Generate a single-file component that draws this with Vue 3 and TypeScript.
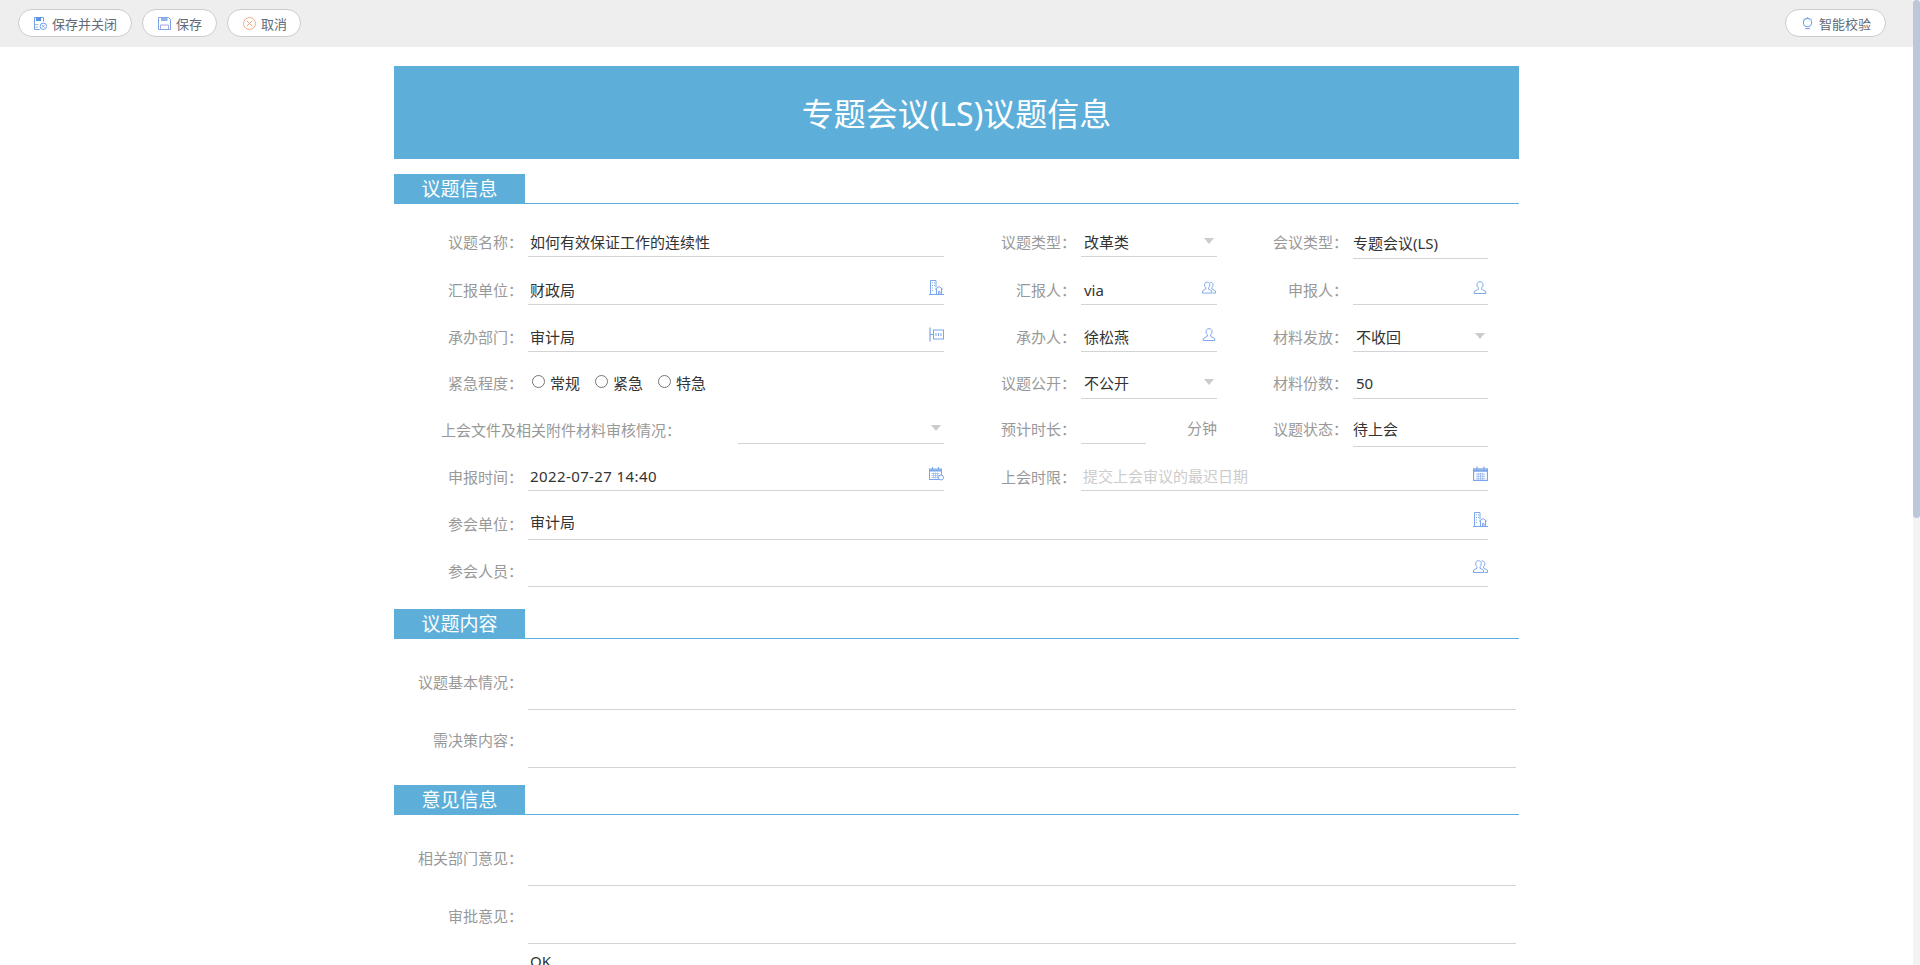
<script setup lang="ts">
const sections = {
  content: [
    { label: '议题基本情况：', value: '' },
    { label: '需决策内容：', value: '' },
  ],
  opinion: [
    { label: '相关部门意见：', value: '' },
    { label: '审批意见：', value: '' },
  ],
}
const urgency = ['常规', '紧急', '特急']
</script>

<template>
  <div class="page">
    <svg class="sprite" aria-hidden="true">
      <symbol id="i-building" viewBox="0 0 15 15">
        <path d="M0 14.500h15M1.500 14.500V0.500h5.500v7M3 3h1M5 3h1M3 5.500h1M5 5.500h1M3 8h1M3 10.500h1" fill="none" stroke="currentColor" />
        <path d="M6 9.500l4-3 4 3M7.500 9v5.500M12.500 9v5.500M9.500 14.500v-3h1.500v3" fill="none" stroke="currentColor" />
      </symbol>
      <symbol id="i-dept" viewBox="0 0 15 15">
        <path d="M1 0.500v14M1 7.500h3" fill="none" stroke="currentColor" stroke-width="1.200" />
        <rect x="4.500" y="3" width="10" height="9" fill="none" stroke="currentColor" />
        <path d="M7 6v3M9.500 6v3M12 6v3" fill="none" stroke="currentColor" />
      </symbol>
      <symbol id="i-person" viewBox="0 0 13 13">
        <path d="M6.500 0.700c-1.900 0-3 1.200-3 3 0 1.400 0.500 2.500 1.400 3.200v1.300L0.700 10.700v1.800h11.600v-1.800L8.100 8.200V6.900c0.900-0.700 1.400-1.800 1.400-3.200 0-1.800-1.100-3-3-3z" fill="none" stroke="currentColor" />
      </symbol>
      <symbol id="i-persons" viewBox="0 0 15 13">
        <path d="M5.500 0.700c-1.700 0-2.800 1.200-2.800 3 0 1.400 0.500 2.400 1.300 3.100v1.400L0.500 10.200v2.300h10v-2.300L7 8.200V6.800c0.800-0.700 1.300-1.700 1.300-3.100 0-1.800-1.100-3-2.800-3z" fill="none" stroke="currentColor" />
        <path d="M8.500 1c1.900-0.500 3.300 0.900 3.300 2.700 0 1.300-0.400 2.300-1.200 3v1.400l3.900 2.100v2.300h-3" fill="none" stroke="currentColor" />
      </symbol>
      <symbol id="i-calendar" viewBox="0 0 13 13">
        <rect x="0.500" y="2.500" width="12" height="10" fill="none" stroke="currentColor" />
        <path d="M0.500 3h12v2h-12z" fill="currentColor" />
        <path d="M3.500 0.500v3M9.500 0.500v3" stroke="currentColor" />
        <path d="M2.500 7h8M2.500 9h8M2.500 11h8M4.500 6v6M6.500 6v6M8.500 6v6" stroke="currentColor" stroke-width="0.700" opacity="0.800" />
      </symbol>
      <symbol id="i-calendar-clock" viewBox="0 0 15 14">
        <rect x="0.500" y="2.500" width="12" height="10.500" fill="none" stroke="currentColor" />
        <path d="M0.500 3h12v2h-12z" fill="currentColor" />
        <path d="M3.500 0.500v3M9.500 0.500v3" stroke="currentColor" />
        <path d="M2.500 7h8M2.500 9h8M2.500 11h8M4.500 6v6M6.500 6v6M8.500 6v6" stroke="currentColor" stroke-width="0.700" opacity="0.800" />
        <circle cx="12" cy="11" r="2.500" fill="#fff" stroke="currentColor" />
      </symbol>
    </svg>

    <div class="content">
      <div class="toolbar">
        <button class="tool">
          <svg class="tool-icon" viewBox="0 0 13 13">
            <path d="M0.500 5.500V0.500h9v4M0.500 5.500v7h5" fill="none" stroke="#6e9fe6" />
            <path d="M2 0.500h5v3.500h-5z" fill="#5b93e0" />
            <path d="M0.500 7.500h4M0.500 10h3.500" stroke="#9ab8ea" />
            <circle cx="9.300" cy="9.300" r="3.200" fill="#fff" stroke="#6e9fe6" />
            <path d="M8 8l2.600 2.600M10.600 8L8 10.600" stroke="#6e9fe6" stroke-width="0.800" />
          </svg>
          保存并关闭
        </button>
        <button class="tool">
          <svg class="tool-icon" viewBox="0 0 13 13">
            <path d="M0.500 0.500h10l2 2v10h-12z" fill="none" stroke="#7ba4e6" />
            <path d="M3 0.500h6.500v3.500H3z" fill="#8fb2ea" />
            <path d="M2.500 12.500v-4.500h8v4.500" fill="none" stroke="#a9a6ea" />
          </svg>
          保存
        </button>
        <button class="tool tool-cancel">
          <svg class="tool-icon" viewBox="0 0 13 13">
            <circle cx="6.500" cy="6.500" r="6" fill="none" stroke="#e8ad8a" />
            <path d="M3.800 3.800l5.400 5.400M9.200 3.800l-5.400 5.400" stroke="#e8a27c" />
          </svg>
          取消
        </button>
        <button class="tool tool-right">
          <svg class="tool-icon" viewBox="0 0 13 14">
            <circle cx="6.500" cy="6" r="4.500" fill="none" stroke="#6ea8ea" stroke-width="1.200" />
            <path d="M4 12.500h5" stroke="#9a8fe8" stroke-width="1.200" />
            <path d="M6.500 0v1M1.500 1.500l0.800 0.800M11.500 1.500l-0.800 0.800" stroke="#b5a8ea" />
          </svg>
          智能校验
        </button>
      </div>

      <div class="sheet">
        <h1 class="banner">专题会议(LS)议题信息</h1>

        <div class="section-head"><span>议题信息</span></div>
        <div class="form">
          <!-- row 1 -->
          <div class="label">议题名称：</div>
          <div class="field c1">如何有效保证工作的连续性</div>
          <div class="label">议题类型：</div>
          <div class="field">改革类<i class="caret" /></div>
          <div class="label wide">会议类型：</div>
          <div class="field flush down2">专题会议(LS)</div>

          <!-- row 2 -->
          <div class="label">汇报单位：</div>
          <div class="field c1">财政局<svg class="ico"><use href="#i-building" /></svg></div>
          <div class="label">汇报人：</div>
          <div class="field">via<svg class="ico ico-p"><use href="#i-persons" /></svg></div>
          <div class="label wide">申报人：</div>
          <div class="field"><svg class="ico ico-p"><use href="#i-person" /></svg></div>

          <!-- row 3 -->
          <div class="label">承办部门：</div>
          <div class="field c1">审计局<svg class="ico"><use href="#i-dept" /></svg></div>
          <div class="label">承办人：</div>
          <div class="field">徐松燕<svg class="ico ico-p"><use href="#i-person" /></svg></div>
          <div class="label wide">材料发放：</div>
          <div class="field">不收回<i class="caret" /></div>

          <!-- row 4 -->
          <div class="label rise-label">紧急程度：</div>
          <div class="radios">
            <label v-for="item in urgency" :key="item" class="radio">
              <input type="radio" name="urgency" />
              <span>{{ item }}</span>
            </label>
          </div>
          <div class="label rise-label">议题公开：</div>
          <div class="field rise">不公开<i class="caret" /></div>
          <div class="label wide rise-label">材料份数：</div>
          <div class="field rise">50</div>

          <!-- row 5 -->
          <div class="audit up3">
            <div class="label audit-label">上会文件及相关附件材料审核情况：</div>
            <div class="field audit-field"><i class="caret" /></div>
          </div>
          <div class="label up3">预计时长：</div>
          <div class="duration up3">
            <div class="field duration-field" />
            <span class="unit">分钟</span>
          </div>
          <div class="label wide up3">议题状态：</div>
          <div class="field flush status">待上会</div>

          <!-- row 6 -->
          <div class="label low-label">申报时间：</div>
          <div class="field c1 date">2022-07-27 14:40<svg class="ico"><use href="#i-calendar-clock" /></svg></div>
          <div class="label low-label">上会时限：</div>
          <div class="field span3 placeholder">提交上会审议的最迟日期<svg class="ico ico-c"><use href="#i-calendar" /></svg></div>

          <!-- row 7 -->
          <div class="label tall-label">参会单位：</div>
          <div class="field c1 span5 tall">审计局<svg class="ico ico-c"><use href="#i-building" /></svg></div>

          <!-- row 8 -->
          <div class="label tall-label">参会人员：</div>
          <div class="field c1 span5 tall"><svg class="ico ico-c"><use href="#i-persons" /></svg></div>
        </div>

        <div class="section-head second"><span>议题内容</span></div>
        <div class="long-list">
          <div v-for="row in sections.content" :key="row.label" class="long-row">
            <div class="long-label">{{ row.label }}</div>
            <div class="long-value">{{ row.value }}</div>
          </div>
        </div>

        <div class="section-head third"><span>意见信息</span></div>
        <div class="long-list">
          <div v-for="row in sections.opinion" :key="row.label" class="long-row">
            <div class="long-label">{{ row.label }}</div>
            <div class="long-value">{{ row.value }}</div>
          </div>
        </div>
        <div class="trailing">OK</div>
      </div>
    </div>
    <div class="track"><div class="thumb" /></div>
  </div>
</template>

<style scoped>
.page {
  position: relative;
  height: 965px;
  overflow: hidden;
  background: #fff;
  font-family: "Noto Sans", "Noto Sans CJK SC", sans-serif;
  color: #333;
}
.content { width: 1913px; }
.track {
  position: absolute;
  top: 0;
  right: 0;
  bottom: 0;
  width: 7px;
  background: #f3f3f3;
}
.thumb {
  height: 518px;
  border-radius: 4px;
  background: #bcc8d9;
}
.sprite { display: none; }

.toolbar {
  display: flex;
  gap: 10px;
  height: 47px;
  padding: 9px 27px 0 18px;
  background: #eee;
  box-sizing: border-box;
}
.tool {
  display: flex;
  align-items: center;
  gap: 5px;
  height: 28px;
  padding: 0 14px 0 15px;
  border: 1px solid #ccc;
  border-radius: 14px;
  background: #fff;
  color: #5f6b78;
  font: 13px "Noto Sans", "Noto Sans CJK SC", sans-serif;
}
.tool-cancel { padding-right: 13px; }
.tool-right { margin-left: auto; }
.tool-icon { width: 13px; height: 13px; flex: none; }

.sheet {
  width: 1125px;
  min-height: 1724px;
  margin: 19px auto 0;
}
.banner {
  height: 93px;
  margin: 0 0 15px;
  background: #5dafd9;
  color: #fff;
  font-size: 32px;
  font-weight: 400;
  line-height: 95px;
  text-align: center;
}
.section-head {
  height: 30px;
  border-bottom: 1px solid #5dafd9;
  box-sizing: border-box;
}
.section-head span {
  display: block;
  width: 131px;
  height: 29px;
  background: #5dafd9;
  color: #fff;
  font-size: 19px;
  line-height: 31px;
  text-align: center;
}
.second { margin-top: 22px; }
.third { margin-top: 17px; }

.form {
  display: grid;
  grid-template-columns: 134px 416px 137px 136px 136px 135px;
  grid-template-rows: 53px 48px 47px 47px 48px 44px 49px 47px;
  font-size: 15px;
}
.label {
  align-self: end;
  padding: 0 5px 3px 0;
  color: #999;
  line-height: 24px;
  text-align: right;
  white-space: nowrap;
}
.label.wide { grid-column: 5; padding-right: 5px; }
.label.rise-label { padding-bottom: 4px; }
.label.low-label { padding-bottom: 2px; }
.label.tall-label { padding-bottom: 4px; }
.field {
  display: flex;
  align-items: center;
  align-self: end;
  height: 28px;
  padding: 0 0 1px 3px;
  border-bottom: 1px solid #d3d3d3;
  box-sizing: border-box;
  line-height: 24px;
  white-space: nowrap;
}
.c1 { padding-left: 2px; }
.flush { padding-left: 0; }
.down2 { margin-bottom: -2px; padding-bottom: 4px; }
.rise { padding-bottom: 3px; }
.up3 { margin-bottom: 3px; }
.span3 { grid-column: 4 / span 3; }
.span5 { grid-column: 2 / span 5; }
.placeholder { color: #ccc; padding-left: 2px; }
.date { letter-spacing: 0.4px; }
.status { height: 30px; align-items: flex-start; padding: 0; }
.tall { height: 30px; padding-bottom: 5px; }

.ico {
  width: 15px;
  height: 15px;
  margin: -5px 0 0 auto;
  color: #7ba6ea;
  flex: none;
}
.ico-p { width: 14px; height: 13px; margin-right: 1px; margin-top: -6px; }
.ico-c { margin-right: 0; }
.caret {
  width: 0;
  height: 0;
  margin: -2px 3px 0 auto;
  border-left: 5px solid transparent;
  border-right: 5px solid transparent;
  border-top: 6px solid #ccc;
}

.radios {
  display: flex;
  align-self: end;
  gap: 15px;
  height: 28px;
  padding: 0 0 4px 4px;
  box-sizing: border-box;
  line-height: 24px;
}
.radio { display: flex; align-items: center; gap: 5px; }
.radio input { width: 13px; height: 13px; margin: -3px 0 0; }

.audit {
  grid-column: 1 / span 2;
  display: flex;
  align-self: end;
}
.audit .audit-label { padding: 0 0 2px 47px; }
.audit-field { width: 206px; margin-left: auto; }
.duration {
  display: flex;
  align-self: end;
  justify-content: space-between;
}
.duration-field { width: 65px; }
.unit { color: #999; line-height: 24px; padding-bottom: 1px; }

.long-row {
  display: flex;
  height: 58px;
  align-items: flex-end;
  font-size: 15px;
}
.long-list .long-row:first-child { height: 71px; }
.long-label {
  width: 129px;
  margin-bottom: 16px;
  padding-right: 5px;
  color: #999;
  line-height: 24px;
  text-align: right;
}
.long-value {
  width: 988px;
  border-bottom: 1px solid #d3d3d3;
}
.trailing {
  margin: 5px 0 0 134px;
  padding-left: 2px;
  font-size: 15px;
  line-height: 24px;
}
</style>

<style>
html, body { margin: 0; overflow: hidden; }
</style>
